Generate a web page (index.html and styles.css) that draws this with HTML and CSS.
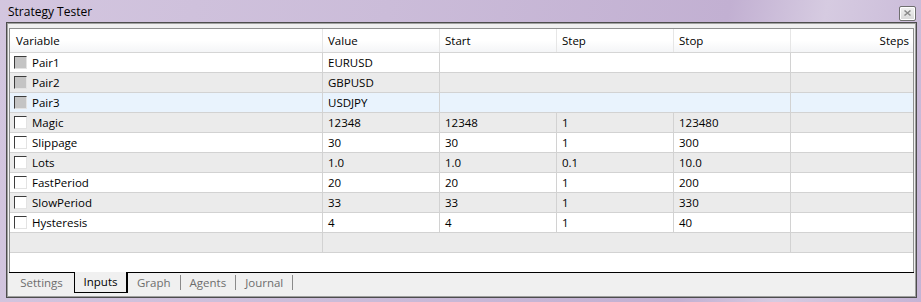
FILE: index.html
```html
<!DOCTYPE html>
<html>
<head>
<meta charset="utf-8">
<link rel="stylesheet" href="styles.css">
</head>
<body>
<div class="window">
  <div class="titlebar">
    <span class="title">Strategy Tester</span>
    <span class="close"><svg width="9" height="8" viewBox="0 0 9 8"><path d="M1.5 1.5 L7.5 6.5 M7.5 1.5 L1.5 6.5" stroke="#8a8a8a" stroke-width="1.6"/></svg></span>
  </div>
  <div class="panel">
    <div class="grid">
      <div class="row head">
        <div class="c c1">Variable</div>
        <div class="c c2">Value</div>
        <div class="c c3">Start</div>
        <div class="c c4">Step</div>
        <div class="c c5">Stop</div>
        <div class="c c6 right">Steps</div>
      </div>
      <div class="row">
        <div class="c c1"><span class="cb dis"></span>Pair1</div>
        <div class="c c2">EURUSD</div>
        <div class="c span3"></div>
        <div class="c c6"></div>
      </div>
      <div class="row alt">
        <div class="c c1"><span class="cb dis"></span>Pair2</div>
        <div class="c c2">GBPUSD</div>
        <div class="c span3"></div>
        <div class="c c6"></div>
      </div>
      <div class="row sel">
        <div class="c c1"><span class="cb dis"></span>Pair3</div>
        <div class="c c2">USDJPY</div>
        <div class="c span3"></div>
        <div class="c c6"></div>
      </div>
      <div class="row alt">
        <div class="c c1"><span class="cb"></span>Magic</div>
        <div class="c c2">12348</div>
        <div class="c c3">12348</div>
        <div class="c c4">1</div>
        <div class="c c5">123480</div>
        <div class="c c6"></div>
      </div>
      <div class="row">
        <div class="c c1"><span class="cb"></span>Slippage</div>
        <div class="c c2">30</div>
        <div class="c c3">30</div>
        <div class="c c4">1</div>
        <div class="c c5">300</div>
        <div class="c c6"></div>
      </div>
      <div class="row alt">
        <div class="c c1"><span class="cb"></span>Lots</div>
        <div class="c c2">1.0</div>
        <div class="c c3">1.0</div>
        <div class="c c4">0.1</div>
        <div class="c c5">10.0</div>
        <div class="c c6"></div>
      </div>
      <div class="row">
        <div class="c c1"><span class="cb"></span>FastPeriod</div>
        <div class="c c2">20</div>
        <div class="c c3">20</div>
        <div class="c c4">1</div>
        <div class="c c5">200</div>
        <div class="c c6"></div>
      </div>
      <div class="row alt">
        <div class="c c1"><span class="cb"></span>SlowPeriod</div>
        <div class="c c2">33</div>
        <div class="c c3">33</div>
        <div class="c c4">1</div>
        <div class="c c5">330</div>
        <div class="c c6"></div>
      </div>
      <div class="row">
        <div class="c c1"><span class="cb"></span>Hysteresis</div>
        <div class="c c2">4</div>
        <div class="c c3">4</div>
        <div class="c c4">1</div>
        <div class="c c5">40</div>
        <div class="c c6"></div>
      </div>
      <div class="row alt">
        <div class="c c1"></div>
        <div class="c span4"></div>
        <div class="c c6"></div>
      </div>
      <div class="filler"></div>
    </div>
    <div class="tabs">
      <div class="tab first">Settings</div>
      <div class="tab active">Inputs</div>
      <div class="tab">Graph</div>
      <div class="sep"></div>
      <div class="tab">Agents</div>
      <div class="sep"></div>
      <div class="tab">Journal</div>
      <div class="sep"></div>
      <div class="tabrest"></div>
    </div>
  </div>
</div>
</body>
</html>
```

FILE: styles.css
```css
* { box-sizing: border-box; }
html, body { margin: 0; padding: 0; }
body {
  width: 921px;
  height: 302px;
  overflow: hidden;
  font-family: "Open Sans", "Noto Sans", sans-serif;
  font-size: 11.5px;
  color: #000;
  background: #c6b5d5;
}
.window {
  width: 921px;
  height: 302px;
  display: flex;
  flex-direction: column;
  background: linear-gradient(100deg, #d3c6df 0%, #cbbcd9 40%, #c2b0d2 75%, #d6cbe1 85%, #c5b4d5 100%);
}
.titlebar {
  height: 22px;
  display: flex;
  align-items: center;
  justify-content: space-between;
  padding: 0 5px 0 8px;
  flex: none;
}
.title { font-size: 12px; padding-top: 1px; }
.close {
  width: 17px;
  height: 15px;
  margin-top: 4px;
  border: 1px solid #6f6f6f;
  border-radius: 2px;
  background: linear-gradient(#f2f2f2, #d8d8d8);
  box-shadow: inset 0 0 0 1px #ffffff;
  display: flex;
  align-items: center;
  justify-content: center;
}
.panel {
  margin: 0 4px 0 6px;
  height: 276px;
  border: 1px solid #4d4d4d;
  background: #f0f0f0;
  box-shadow: inset 1px 1px 0 #a0a0a0, inset -1px -1px 0 #a0a0a0;
  padding: 5px 2px 0 2px;
  display: flex;
  flex-direction: column;
}
.grid {
  height: 244px;
  border: 1px solid #8e8f8f;
  border-bottom: none;
  background: #fff;
  display: flex;
  flex-direction: column;
}
.row {
  display: flex;
  height: 20px;
  border-bottom: 1px solid #d2d2d2;
  flex: none;
}
.row.head {
  height: 24px;
  background: linear-gradient(#ffffff 0%, #ffffff 50%, #f4f5f7 100%);
  border-bottom: 1px solid #d5d5d5;
}
.row.alt { background: #ebebeb; }
.row.sel { background: #e9f3fd; }
.c {
  display: flex;
  align-items: center;
  padding-left: 5px;
  border-right: 1px solid #d2d2d2;
  white-space: nowrap;
  line-height: 1;
}
.head .c { border-right-color: #e6e6e6; padding-top: 1px; }
.c1 { width: 313px; padding-left: 6px; }
.c2, .c3, .c4, .c5 { width: 117px; }
.span3 { width: 351px; }
.span4 { width: 468px; }
.c6 { flex: 1; border-right: none; }
.right { justify-content: flex-end; padding-right: 4px; }
.cb {
  width: 13px;
  height: 13px;
  margin-right: 5px;
  margin-left: -2px;
  background: #fff;
  border-top: 1px solid #3c3c3c;
  border-left: 1px solid #3c3c3c;
  border-right: 1px solid #e3e3e3;
  border-bottom: 1px solid #e3e3e3;
  flex: none;
}
.cb.dis { background: #c4c4c4; }
.filler { flex: 1; }
.tabs {
  display: flex;
  height: 21px;
  align-items: stretch;
  font-size: 11.5px;
  color: #6d6d6d;
}
.tab {
  padding: 0 9px;
  display: flex;
  align-items: center;
  justify-content: center;
  border-top: 1px solid #000;
  padding-bottom: 2px;
}
.tab.first { width: 65px; padding: 0 0 2px 0; }
.tab.active {
  width: 54px;
  padding: 0 0 2px 0;
  color: #000;
  border-top: none;
  border-left: 1px solid #000;
  border-right: 2px solid #000;
  border-bottom: 1px solid #000;
  background: #f0f0f0;
}
.sep {
  width: 1px;
  border-top: 1px solid #000;
}
.sep::after {
  content: "";
  display: block;
  width: 1px;
  height: 15px;
  margin-top: 2px;
  background: #8a8a8a;
}
.tabrest { flex: 1; border-top: 1px solid #000; }
```
